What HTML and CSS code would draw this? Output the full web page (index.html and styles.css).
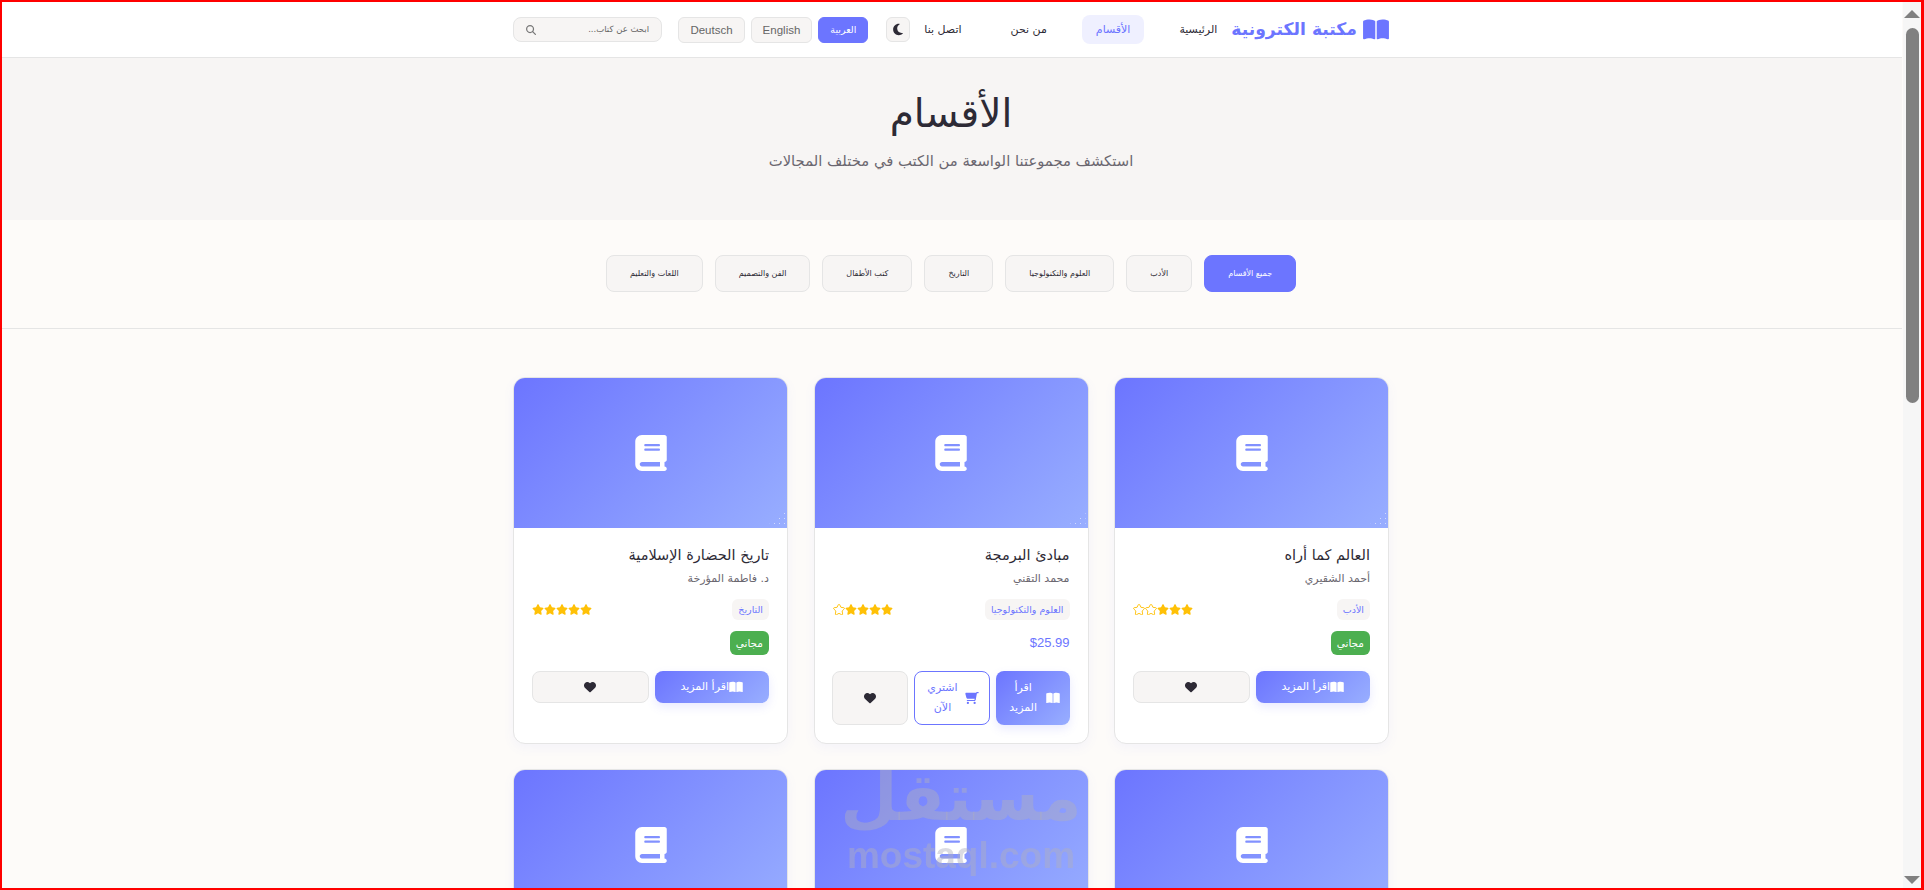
FILE: index.html
```html
<!DOCTYPE html>
<html lang="ar" dir="rtl">
<head>
    <meta charset="UTF-8">
    <meta name="viewport" content="width=device-width, initial-scale=1.0">
    <title>الأقسام - مكتبة الكترونية</title>
    <link rel="stylesheet" href="styles.css">
</head>
<body>
    <!-- shared icons -->
    <svg class="icon-defs" aria-hidden="true">
        <symbol id="i-book" viewBox="0 0 448 512"><path d="M96 0C43 0 0 43 0 96V416c0 53 43 96 96 96H384h32c17.7 0 32-14.3 32-32s-14.3-32-32-32V384c17.7 0 32-14.3 32-32V32c0-17.7-14.3-32-32-32H384 96zm0 384H352v64H96c-17.7 0-32-14.3-32-32s14.3-32 32-32zm32-240c0-8.8 7.2-16 16-16H336c8.8 0 16 7.2 16 16s-7.2 16-16 16H144c-8.8 0-16-7.2-16-16zm16 48H336c8.8 0 16 7.2 16 16s-7.2 16-16 16H144c-8.8 0-16-7.2-16-16s7.2-16 16-16z"/></symbol>
        <symbol id="i-open" viewBox="0 0 576 512"><path d="M249.6 471.5c10.8 3.8 22.4-4.1 22.4-15.5V78.6c0-4.2-1.6-8.4-5-11C247.4 52 202.4 32 144 32C93.5 32 46.3 45.3 18.1 56.1C6.8 60.5 0 71.7 0 83.8V454.1c0 11.9 12.8 20.2 24.1 16.5C55.6 460.1 105.5 448 144 448c33.9 0 79 14 105.6 23.5zm76.8 0C353 462 398.1 448 432 448c38.5 0 88.4 12.1 119.9 22.6c11.3 3.8 24.1-4.6 24.1-16.5V83.8c0-12.1-6.8-23.3-18.1-27.6C529.7 45.3 482.5 32 432 32c-58.4 0-103.4 20-123 35.6c-3.3 2.6-5 6.8-5 11V456c0 11.4 11.7 19.3 22.4 15.5z"/></symbol>
        <symbol id="i-heart" viewBox="0 0 512 512"><path d="M47.6 300.4L228.3 469.1c7.5 7 17.4 10.9 27.7 10.9s20.2-3.9 27.7-10.9L464.4 300.4c30.4-28.3 47.6-68 47.6-109.5v-5.8c0-69.9-50.5-129.5-119.4-141C347 36.5 300.6 51.4 268 84L256 96 244 84c-32.6-32.6-79-47.5-124.6-39.9C50.5 55.6 0 115.2 0 185.1v5.8c0 41.5 17.2 81.2 47.6 109.5z"/></symbol>
        <symbol id="i-star" viewBox="0 0 576 512"><path d="M316.9 18C311.6 7 300.4 0 288.1 0s-23.4 7-28.8 18L195 150.3 51.4 171.5c-12 1.8-22 10.2-25.7 21.7s-.7 24.2 7.9 32.7L137.8 329 113.2 474.7c-2 12 3 24.2 12.9 31.3s23 8 33.8 2.3l128.3-68.5 128.3 68.5c10.8 5.7 23.9 4.9 33.8-2.3s14.9-19.3 12.9-31.3L438.5 329 542.7 225.9c8.6-8.5 11.7-21.2 7.9-32.7s-13.7-19.9-25.7-21.7L381.2 150.3 316.9 18z"/></symbol>
        <symbol id="i-cart" viewBox="0 0 576 512"><path d="M0 24C0 10.7 10.7 0 24 0H69.5c22 0 41.5 12.8 50.6 32h411c26.3 0 45.5 25 38.6 50.4l-41 152.3c-8.5 31.4-37 53.3-69.5 53.3H170.7l5.4 28.5c2.2 11.3 12.1 19.5 23.6 19.5H488c13.3 0 24 10.7 24 24s-10.7 24-24 24H199.7c-34.6 0-64.3-24.6-70.7-58.5L77.4 54.5c-.7-3.8-4-6.5-7.9-6.5H24C10.7 48 0 37.3 0 24zM128 464a48 48 0 1 1 96 0 48 48 0 1 1 -96 0zm336-48a48 48 0 1 1 0 96 48 48 0 1 1 0-96z"/></symbol>
    </svg>

    <div class="page">
        <header class="navbar">
            <div class="container nav-inner">
                <a class="logo" href="#">
                    <svg class="logo-icon"><use href="#i-open"/></svg>
                    <span>مكتبة الكترونية</span>
                </a>
                <nav class="nav-links">
                    <a href="#">الرئيسية</a>
                    <a href="#" class="active">الأقسام</a>
                    <a href="#">من نحن</a>
                    <a href="#">اتصل بنا</a>
                </nav>
                <button class="theme-btn" aria-label="الوضع الليلي">
                    <svg viewBox="0 0 384 512"><path d="M223.5 32C100 32 0 132.3 0 256S100 480 223.5 480c60.6 0 115.5-24.2 155.8-63.4c5-4.9 6.3-12.5 3.1-18.7s-10.1-9.7-17-8.5c-9.8 1.7-19.8 2.6-30.1 2.6c-96.9 0-175.5-78.8-175.5-176c0-65.8 36-123.1 89.3-153.3c6.1-3.5 9.2-10.5 7.7-17.3s-7.3-11.9-14.3-12.5c-6.3-.5-12.6-.8-19-.8z"/></svg>
                </button>
                <div class="lang-group">
                    <button class="lang-btn active">العربية</button>
                    <button class="lang-btn">English</button>
                    <button class="lang-btn">Deutsch</button>
                </div>
                <div class="search-box">
                    <span class="search-text">ابحث عن كتاب...</span>
                    <svg viewBox="0 0 512 512"><path d="M416 208c0 45.9-14.9 88.3-40 122.7L502.6 457.4c12.5 12.5 12.5 32.8 0 45.3s-32.8 12.5-45.3 0L330.7 376c-34.4 25.2-76.8 40-122.7 40C93.1 416 0 322.9 0 208S93.1 0 208 0S416 93.1 416 208zM208 352a144 144 0 1 0 0-288 144 144 0 1 0 0 288z"/></svg>
                </div>
            </div>
        </header>

        <section class="hero">
            <h1>الأقسام</h1>
            <p>استكشف مجموعتنا الواسعة من الكتب في مختلف المجالات</p>
        </section>

        <section class="filters">
            <button class="filter-btn active">جميع الأقسام</button>
            <button class="filter-btn">الأدب</button>
            <button class="filter-btn">العلوم والتكنولوجيا</button>
            <button class="filter-btn">التاريخ</button>
            <button class="filter-btn">كتب الأطفال</button>
            <button class="filter-btn">الفن والتصميم</button>
            <button class="filter-btn">اللغات والتعليم</button>
        </section>

        <main class="container book-grid">
            <article class="book-card">
                <div class="book-cover"><svg><use href="#i-book"/></svg></div>
                <div class="book-body">
                    <h3>العالم كما أراه</h3>
                    <p class="author">أحمد الشقيري</p>
                    <div class="meta">
                        <span class="tag">الأدب</span>
                        <span class="stars">
                            <svg><use href="#i-star"/></svg><svg><use href="#i-star"/></svg><svg><use href="#i-star"/></svg><svg class="empty"><use href="#i-star"/></svg><svg class="empty"><use href="#i-star"/></svg>
                        </span>
                    </div>
                    <div class="price-row"><span class="free">مجاني</span></div>
                    <div class="actions">
                        <a class="btn btn-read" href="#"><svg><use href="#i-open"/></svg>اقرأ المزيد</a>
                        <button class="btn btn-fav"><svg><use href="#i-heart"/></svg></button>
                    </div>
                </div>
            </article>

            <article class="book-card">
                <div class="book-cover"><svg><use href="#i-book"/></svg></div>
                <div class="book-body">
                    <h3>مبادئ البرمجة</h3>
                    <p class="author">محمد التقني</p>
                    <div class="meta">
                        <span class="tag">العلوم والتكنولوجيا</span>
                        <span class="stars">
                            <svg><use href="#i-star"/></svg><svg><use href="#i-star"/></svg><svg><use href="#i-star"/></svg><svg><use href="#i-star"/></svg><svg class="empty"><use href="#i-star"/></svg>
                        </span>
                    </div>
                    <div class="price-row"><span class="price">$25.99</span></div>
                    <div class="actions">
                        <a class="btn btn-read" href="#"><svg><use href="#i-open"/></svg><span>اقرأ المزيد</span></a>
                        <a class="btn btn-buy" href="#"><svg class="flip"><use href="#i-cart"/></svg><span>اشتري الآن</span></a>
                        <button class="btn btn-fav"><svg><use href="#i-heart"/></svg></button>
                    </div>
                </div>
            </article>

            <article class="book-card">
                <div class="book-cover"><svg><use href="#i-book"/></svg></div>
                <div class="book-body">
                    <h3>تاريخ الحضارة الإسلامية</h3>
                    <p class="author">د. فاطمة المؤرخة</p>
                    <div class="meta">
                        <span class="tag">التاريخ</span>
                        <span class="stars">
                            <svg><use href="#i-star"/></svg><svg><use href="#i-star"/></svg><svg><use href="#i-star"/></svg><svg><use href="#i-star"/></svg><svg><use href="#i-star"/></svg>
                        </span>
                    </div>
                    <div class="price-row"><span class="free">مجاني</span></div>
                    <div class="actions">
                        <a class="btn btn-read" href="#"><svg><use href="#i-open"/></svg>اقرأ المزيد</a>
                        <button class="btn btn-fav"><svg><use href="#i-heart"/></svg></button>
                    </div>
                </div>
            </article>

            <article class="book-card">
                <div class="book-cover"><svg><use href="#i-book"/></svg></div>
            </article>
            <article class="book-card">
                <div class="book-cover"><svg><use href="#i-book"/></svg></div>
            </article>
            <article class="book-card">
                <div class="book-cover"><svg><use href="#i-book"/></svg></div>
            </article>
        </main>
    </div>

    <!-- browser scrollbar, watermark and frame of the screenshot -->
    <div class="scrollbar">
        <span class="arrow up"></span>
        <span class="thumb"></span>
        <span class="arrow down"></span>
    </div>
    <div class="watermark">
        <span class="wm-ar">مستقل</span>
        <span class="wm-en">mostaql.com</span>
    </div>
    <div class="frame"></div>
</body>
</html>
```
FILE: styles.css
```css
:root {
    --primary-color: #6c75ff;
    --primary-light: #98aeff;
    --background-color: #fdfbf9;
    --surface-color: #f7f5f4;
    --text-color: #2d2a35;
    --muted-color: #6b6770;
    --border-color: #e5e5e5;
}

* {
    margin: 0;
    padding: 0;
    box-sizing: border-box;
}

html, body {
    height: 100%;
    overflow: hidden;
}

body {
    padding-right: 22px;
    font-family: "DejaVu Sans", "Noto Sans", sans-serif;
    background-color: var(--background-color);
    color: var(--text-color);
    line-height: 1.6;
}

a {
    color: inherit;
    text-decoration: none;
}

button {
    font-family: inherit;
    cursor: pointer;
}

.icon-defs {
    display: none;
}

.page {
    padding-top: 2px;
}

.container {
    width: 876px;
    margin: 0 auto;
}

/* navbar */
.navbar {
    height: 56px;
    background-color: #fff;
    border-bottom: 1px solid var(--border-color);
}

.nav-inner {
    display: flex;
    align-items: center;
    height: 100%;
    white-space: nowrap;
}

.logo {
    display: flex;
    align-items: center;
    gap: 6px;
    font-size: 17.2px;
    font-weight: 700;
    color: var(--primary-color);
}

.logo-icon {
    width: 26px;
    height: 23px;
    fill: var(--primary-color);
}

.nav-links {
    display: flex;
    align-items: center;
    gap: 21px;
    font-size: 11px;
}

.nav-links a {
    padding: 6px 14px;
    border-radius: 8px;
}

.nav-links a.active {
    background-color: #eff0ff;
    color: var(--primary-color);
}

.theme-btn {
    display: flex;
    align-items: center;
    justify-content: center;
    width: 24px;
    height: 25px;
    background-color: var(--surface-color);
    border: 1px solid var(--border-color);
    border-radius: 6px;
}

.theme-btn svg {
    width: 10px;
    height: 13px;
    fill: var(--text-color);
}

.lang-group {
    display: flex;
    gap: 6px;
    margin-right: 18px;
}

.lang-btn {
    height: 26px;
    padding: 0 11px;
    font-family: "Liberation Sans", "DejaVu Sans", sans-serif;
    font-size: 11.5px;
    color: #666;
    background-color: var(--surface-color);
    border: 1px solid var(--border-color);
    border-radius: 6px;
}

.lang-btn.active {
    font-size: 9.5px;
    color: #fff;
    background-color: var(--primary-color);
    border-color: var(--primary-color);
}

.search-box {
    display: flex;
    align-items: center;
    justify-content: space-between;
    width: 149px;
    height: 25px;
    margin-right: auto;
    padding: 0 12px;
    font-size: 8.5px;
    color: #666;
    background-color: var(--surface-color);
    border: 1px solid var(--border-color);
    border-radius: 8px;
}

.search-box svg {
    width: 10px;
    height: 10px;
    fill: #777;
}

/* hero */
.hero {
    height: 162px;
    padding-top: 26px;
    text-align: center;
    background-color: var(--surface-color);
}

.hero h1 {
    font-size: 39px;
    font-weight: 400;
    line-height: 60px;
}

.hero p {
    margin-top: 5px;
    font-size: 14.8px;
    color: var(--muted-color);
}

/* filters */
.filters {
    display: flex;
    justify-content: center;
    gap: 12px;
    height: 109px;
    padding-top: 35px;
    border-bottom: 1px solid var(--border-color);
}

.filter-btn {
    height: 37px;
    padding: 0 23px;
    font-size: 8px;
    color: var(--text-color);
    background-color: var(--surface-color);
    border: 1px solid var(--border-color);
    border-radius: 8px;
}

.filter-btn.active {
    color: #fff;
    background-color: var(--primary-color);
    border-color: var(--primary-color);
}

/* books */
.book-grid {
    display: grid;
    grid-template-columns: repeat(3, 275px);
    justify-content: space-between;
    gap: 25px;
    padding-top: 48px;
}

.book-card {
    overflow: hidden;
    background-color: #fff;
    border: 1px solid var(--border-color);
    border-radius: 12px;
    box-shadow: 0 4px 12px rgba(108, 117, 255, 0.06);
}

.book-cover {
    position: relative;
    display: flex;
    align-items: center;
    justify-content: center;
    height: 150px;
    background: linear-gradient(135deg, var(--primary-color), var(--primary-light));
}

.book-cover svg {
    width: 32px;
    height: 36px;
    fill: #fff;
}

/* dotted corner of the cover */
.book-cover::after {
    content: "";
    position: absolute;
    right: 2px;
    bottom: 2px;
    width: 18px;
    height: 15px;
    background-image: radial-gradient(rgba(255, 255, 255, 0.55) 0.6px, transparent 0.8px);
    background-size: 5px 5px;
    clip-path: polygon(100% 0, 100% 100%, 0 100%);
}

.book-body {
    padding: 14px 18px 18px;
}

.book-body h3 {
    font-size: 14.5px;
    font-weight: 500;
    line-height: 26px;
}

.author {
    margin-top: 1px;
    font-size: 11px;
    line-height: 20px;
    color: var(--muted-color);
}

.meta {
    display: flex;
    align-items: center;
    justify-content: space-between;
    margin-top: 10px;
}

.tag {
    padding: 0 6px;
    height: 21px;
    font-size: 9.5px;
    line-height: 21px;
    color: var(--primary-color);
    background-color: var(--surface-color);
    border-radius: 6px;
}

.stars {
    display: flex;
    gap: 0;
}

.stars svg {
    width: 12px;
    height: 11px;
    fill: #ffc107;
    overflow: visible;
}

.stars svg.empty {
    fill: none;
    stroke: #ffc107;
    stroke-width: 45px;
}

.price-row {
    display: flex;
    align-items: center;
    height: 24px;
    margin-top: 11px;
}

.free {
    height: 24px;
    padding: 0 6px;
    font-size: 10.5px;
    line-height: 24px;
    color: #fff;
    background-color: #4caf50;
    border-radius: 6px;
}

.price {
    font-family: "Liberation Sans", sans-serif;
    font-size: 13px;
    color: var(--primary-color);
}

.actions {
    display: flex;
    gap: 6px;
    margin-top: 16px;
}

.btn {
    display: flex;
    flex: 1;
    align-items: center;
    justify-content: center;
    min-width: 0;
    min-height: 32px;
    padding: 6px 10px;
    font-size: 11px;
    line-height: 20px;
    border-radius: 8px;
}

.btn svg {
    flex-shrink: 0;
    width: 14px;
    height: 12px;
}

.btn-read {
    color: #fff;
    background: linear-gradient(135deg, var(--primary-color), var(--primary-light));
    box-shadow: 0 4px 10px rgba(108, 117, 255, 0.15);
}

.btn-read svg {
    fill: #fff;
}

.btn-read span, .btn-buy span {
    margin-right: 5px;
    text-align: center;
}

.btn-buy {
    color: var(--primary-color);
    background-color: #fff;
    border: 1px solid var(--primary-color);
}

.btn-buy svg {
    fill: var(--primary-color);
}

.flip {
    transform: scaleX(-1);
}

.btn-fav {
    background-color: var(--surface-color);
    border: 1px solid var(--border-color);
}

.btn-fav svg {
    fill: var(--text-color);
}

/* overlays */
.scrollbar {
    position: fixed;
    top: 2px;
    right: 3px;
    bottom: 2px;
    display: flex;
    flex-direction: column;
    align-items: center;
    width: 18px;
    background-color: #f6f6f6;
}

.arrow {
    width: 0;
    height: 0;
    border-right: 8px solid transparent;
    border-left: 8px solid transparent;
}

.arrow.up {
    margin-top: 8px;
    border-bottom: 8px solid #808080;
}

.arrow.down {
    margin-top: auto;
    margin-bottom: 4px;
    border-top: 8px solid #808080;
}

.thumb {
    width: 13px;
    height: 375px;
    margin-top: 10px;
    background-color: #808080;
    border-radius: 7px;
}

.watermark {
    position: fixed;
    top: 750px;
    left: 845px;
    display: flex;
    flex-direction: column;
    align-items: center;
    width: 232px;
    font-weight: 700;
    color: rgba(175, 175, 190, 0.45);
    pointer-events: none;
}

.wm-ar {
    font-size: 66px;
    line-height: 96px;
}

.wm-en {
    margin-top: -5px;
    font-family: "Liberation Sans", sans-serif;
    font-size: 37px;
    line-height: 30px;
}

.frame {
    position: fixed;
    inset: 0;
    border: solid #f00;
    border-width: 2px 3px 2px 2px;
    pointer-events: none;
}
```
